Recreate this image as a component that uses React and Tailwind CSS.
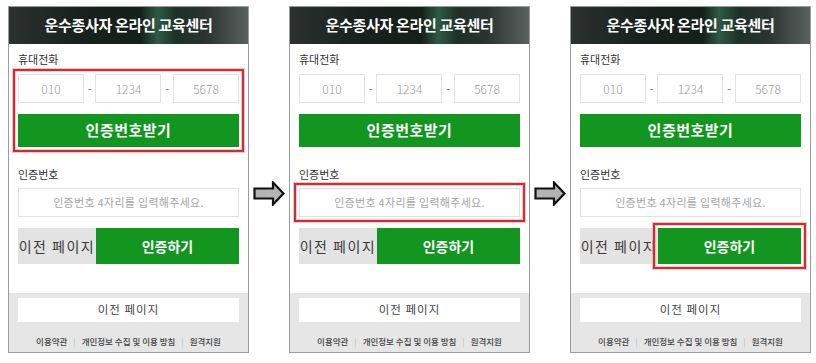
const font = { fontFamily: '"Noto Sans CJK KR", "Noto Sans", sans-serif' };

function Highlight() {
  return (
    <div className="pointer-events-none absolute -inset-[5px] border-2 border-[#c7303a] shadow-[0_0_0_1px_rgba(235,160,160,0.6),inset_0_0_0_1px_rgba(235,160,160,0.6)]" />
  );
}

function PhoneBox({ value }) {
  return (
    <div className="flex h-[29px] w-[66px] items-center justify-center border border-[#e2e2e2] bg-white text-[12px] font-light text-[#9a9a9a]">
      {value}
    </div>
  );
}

function Arrow() {
  return (
    <div className="flex w-[40px] justify-center pt-[175px]">
      <svg width="32" height="25" viewBox="0 0 32 25">
        <path
          d="M1.5 7.5 H20 V1.5 L30.5 12.5 L20 23.5 V17.5 H1.5 Z"
          fill="#b3b3b3"
          stroke="#111"
          strokeWidth="2.2"
          strokeLinejoin="miter"
        />
      </svg>
    </div>
  );
}

function Panel({ mark }) {
  return (
    <div className="flex h-[347px] w-[241px] flex-col border border-[#9c9c9c] bg-white" style={font}>
      <div className="flex h-[37px] items-center justify-center bg-[linear-gradient(90deg,#2c302f_0%,#18211d_30%,#14201a_55%,#2f5a47_62%,#1d3128_70%,#2a3330_82%,#5b605e_100%)]">
        <span className="text-[15px] font-bold tracking-[-0.3px] text-white">운수종사자 온라인 교육센터</span>
      </div>

      <div className="flex flex-1 flex-col px-[9px] pt-[7px]">
        <div className="h-[16px] text-[11px] leading-[16px] text-[#333]">휴대전화</div>

        <div className="relative mt-[7px]">
          {mark === 1 ? <Highlight /> : null}
          <div className="flex items-center justify-between">
            <PhoneBox value="010" />
            <span className="text-[11px] text-[#666]">-</span>
            <PhoneBox value="1234" />
            <span className="text-[11px] text-[#666]">-</span>
            <PhoneBox value="5678" />
          </div>
          <div className="mt-[11px] flex h-[33px] items-center justify-center bg-[#12961f] text-[15px] font-bold tracking-[0.5px] text-white">
            인증번호받기
          </div>
        </div>

        <div className="mt-[19px] h-[16px] text-[11px] leading-[16px] text-[#333]">인증번호</div>

        <div className="relative mt-[6px]">
          {mark === 2 ? <Highlight /> : null}
          <div className="flex h-[29px] items-center justify-center border border-[#e2e2e2] bg-white text-[11px] tracking-[0.3px] text-[#a6a6a6]">
            인증번호 4자리를 입력해주세요.
          </div>
        </div>

        <div className="mt-[11px] flex h-[36px]">
          <div className="flex w-[78px] items-center justify-center bg-[#e3e3e3] text-[14px] tracking-[1.5px] text-[#3a3a3a]">
            이전 페이지
          </div>
          <div className="relative flex flex-1 items-center justify-center bg-[#12961f] text-[14px] font-bold text-white">
            {mark === 3 ? <Highlight /> : null}
            인증하기
          </div>
        </div>
      </div>

      <div className="flex h-[59px] flex-col bg-[#e6e6e6] px-[9px] pt-[5px]">
        <div className="flex h-[24px] items-center justify-center bg-white text-[11.5px] tracking-[1px] text-[#444]">
          이전 페이지
        </div>
        <div className="mt-[13px] flex items-center justify-center gap-[6px] text-[8.5px] font-medium text-[#444]">
          <span>이용약관</span>
          <span className="font-normal text-[#bbb]">|</span>
          <span>개인정보 수집 및 이용 방침</span>
          <span className="font-normal text-[#bbb]">|</span>
          <span>원격지원</span>
        </div>
      </div>
    </div>
  );
}

export default function App() {
  return (
    <div className="h-[363px] w-[816px] bg-white">
      <div className="flex pl-[8px] pt-[6px]">
        <Panel mark={1} />
        <Arrow />
        <Panel mark={2} />
        <Arrow />
        <Panel mark={3} />
      </div>
    </div>
  );
}
